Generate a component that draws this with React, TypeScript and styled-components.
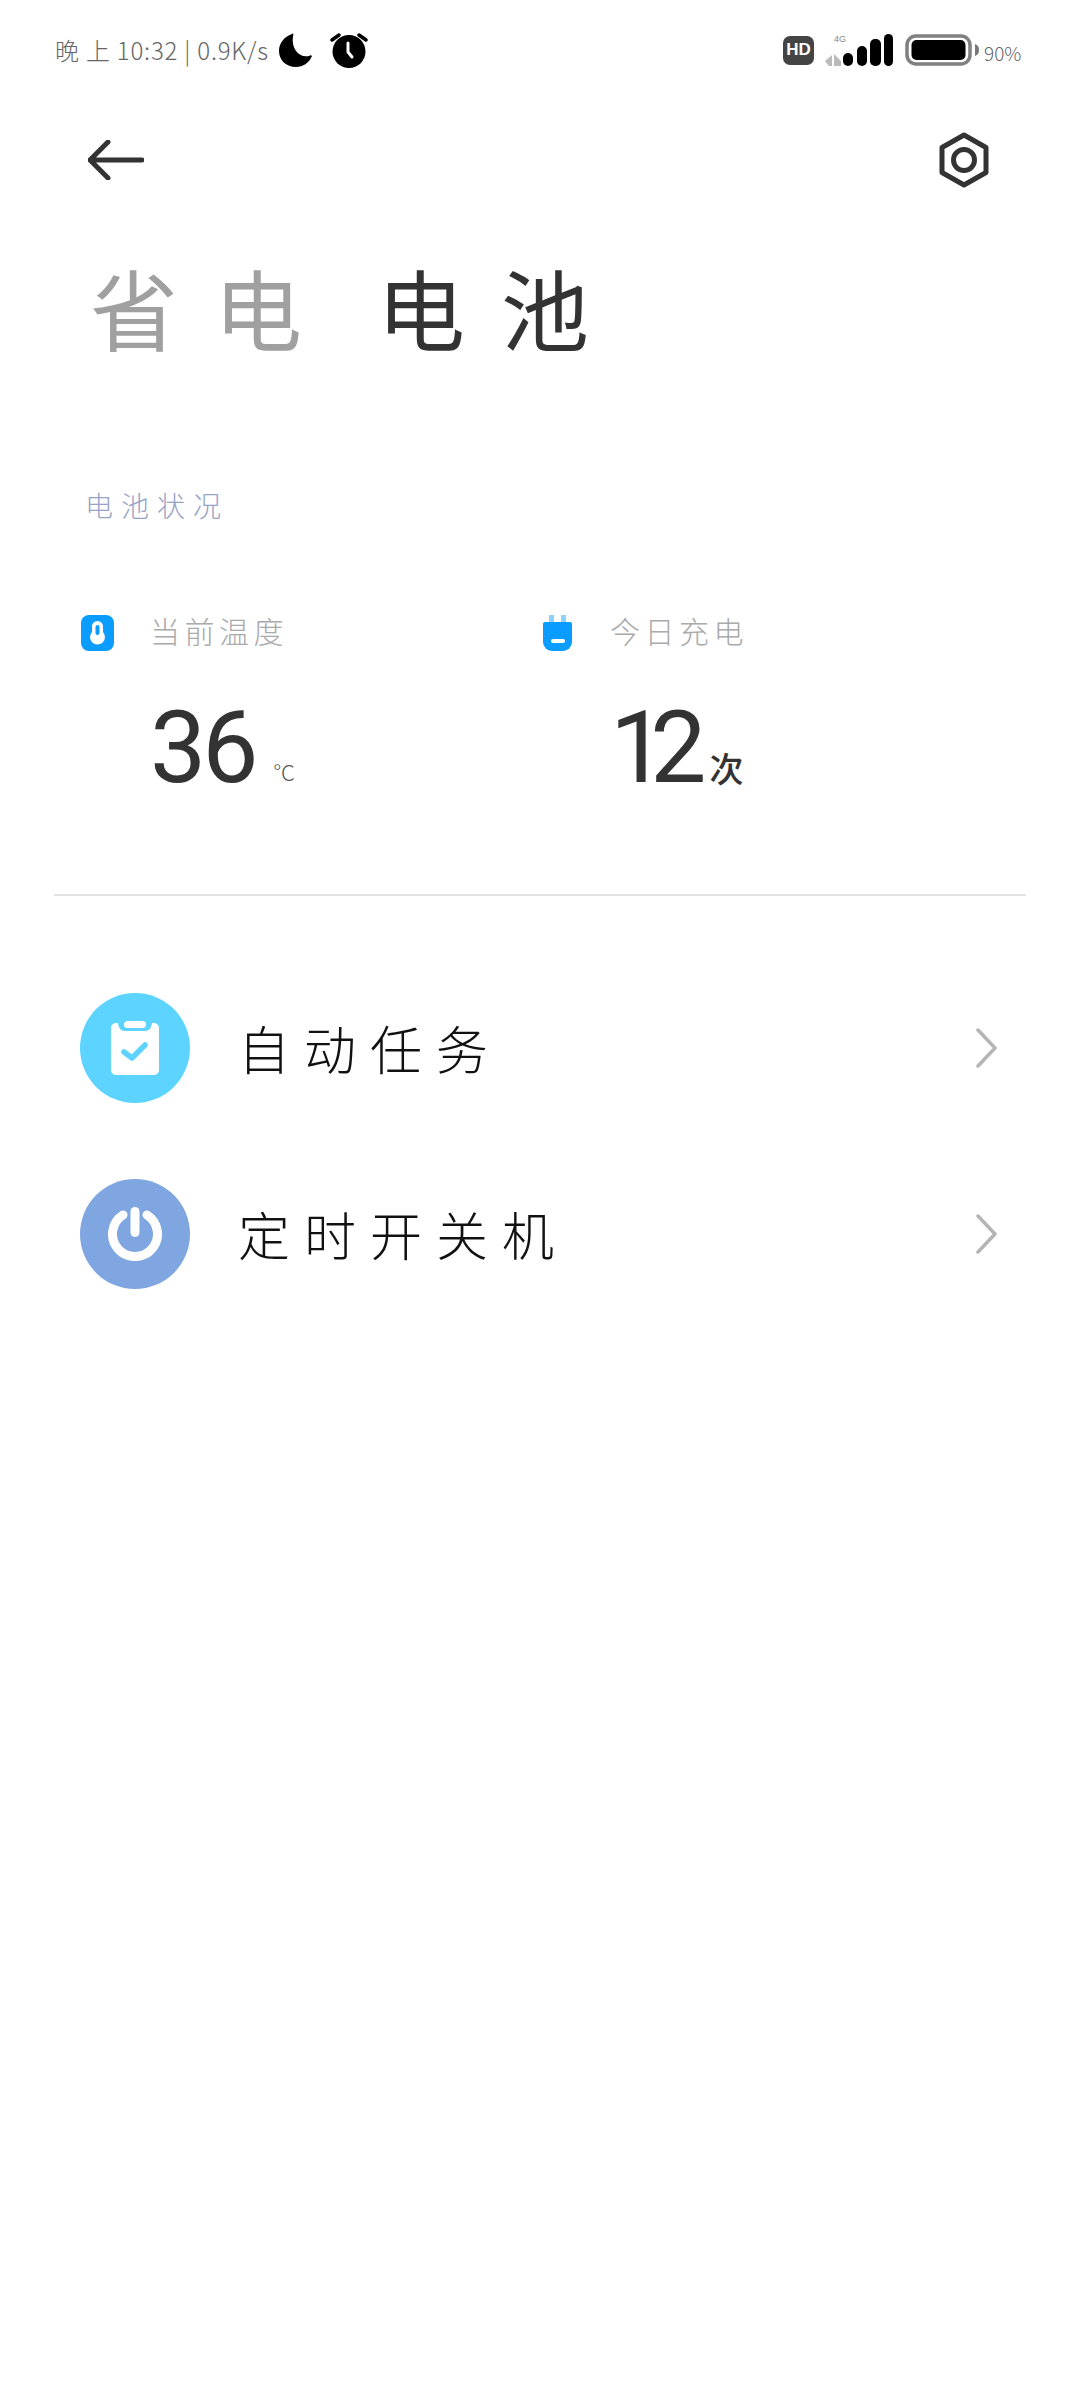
import styled, { createGlobalStyle } from "styled-components";

const GlobalStyle = createGlobalStyle`
  html, body {
    margin: 0;
    padding: 0;
    background: #fff;
  }
  * {
    box-sizing: border-box;
  }
`;

const cjk = `"Noto Sans CJK SC", "Noto Sans", sans-serif`;

const Page = styled.div`
  width: 1080px;
  height: 2400px;
  background: #fff;
  display: flex;
  flex-direction: column;
  font-family: ${cjk};
  overflow: hidden;
`;

const StatusBar = styled.div`
  height: 100px;
  padding: 0 58px 0 55px;
  display: flex;
  align-items: center;
  justify-content: space-between;
`;

const StatusGroup = styled.div`
  display: flex;
  align-items: center;
`;

const StatusText = styled.span`
  font-size: 24px;
  font-weight: 300;
  line-height: 32px;
  letter-spacing: 0.8px;
  color: #666;
  white-space: nowrap;
`;

const HdBadge = styled.span`
  width: 31px;
  height: 29px;
  border-radius: 7px;
  background: #444;
  color: #fff;
  font-family: "Liberation Sans", sans-serif;
  font-size: 17px;
  font-weight: 700;
  display: flex;
  align-items: center;
  justify-content: center;
`;

const SignalWrap = styled.div`
  position: relative;
  width: 68px;
  height: 32px;
  margin-left: 11px;
`;

const SignalType = styled.span`
  position: absolute;
  left: 9px;
  top: 0;
  font-family: "Liberation Sans", sans-serif;
  font-size: 9px;
  line-height: 10px;
  color: #888;
`;

const BatteryPercent = styled.span`
  margin-left: 4px;
  width: 38px;
  font-size: 19px;
  font-weight: 300;
  line-height: 24px;
  color: #666;
  position: relative;
  top: 3px;
`;

const NavBar = styled.div`
  height: 120px;
  padding: 0 90px 0 88px;
  display: flex;
  align-items: center;
  justify-content: space-between;
`;

const Tabs = styled.div`
  margin-top: 24px;
  height: 124px;
  padding-left: 90px;
  display: flex;
  align-items: center;
  gap: 75px;
`;

const Tab = styled.span<{ $active?: boolean }>`
  font-size: 88px;
  font-weight: 400;
  line-height: 124px;
  letter-spacing: 36px;
  margin-right: -36px;
  color: ${({ $active }) => ($active ? "#333" : "#a0a0a0")};
`;

const SectionLabel = styled.div`
  margin-top: 120px;
  padding-left: 85px;
  height: 34px;
  font-size: 28px;
  font-weight: 300;
  line-height: 34px;
  letter-spacing: 8px;
  color: #98a3c6;
`;

const Stats = styled.div`
  margin-top: 92px;
  padding-left: 81px;
  display: grid;
  grid-template-columns: 462px 1fr;
`;

const Stat = styled.div<{ $iconWidth: number }>`
  display: grid;
  grid-template-columns: ${({ $iconWidth }) => $iconWidth}px 1fr;
  grid-template-rows: 38px auto;
  align-items: center;
`;

const StatLabel = styled.span`
  padding-bottom: 6px;
  font-size: 30px;
  font-weight: 300;
  line-height: 38px;
  letter-spacing: 4.5px;
  color: #aaa;
`;

const StatValue = styled.div`
  grid-column: 2;
  margin-top: 50px;
  height: 92px;
  display: flex;
  align-items: flex-end;
`;

const StatNumber = styled.span<{ $tracking: number }>`
  font-family: Roboto, sans-serif;
  font-size: 100px;
  font-weight: 400;
  line-height: 92px;
  letter-spacing: ${({ $tracking }) => $tracking}px;
  color: #333;
`;

const UnitLight = styled.span`
  margin-left: 19px;
  margin-bottom: 10px;
  font-size: 22px;
  font-weight: 300;
  line-height: 26px;
  color: #555;
`;

const UnitBold = styled.span`
  margin-left: 19px;
  margin-bottom: 6px;
  font-size: 34px;
  font-weight: 500;
  line-height: 40px;
  color: #333;
`;

const Divider = styled.div`
  margin: 100px 54px 0;
  height: 2px;
  background: #e3e3e3;
`;

const List = styled.div`
  margin-top: 97px;
  padding: 0 83px 0 80px;
  display: flex;
  flex-direction: column;
  gap: 76px;
`;

const Row = styled.div`
  height: 110px;
  display: flex;
  align-items: center;
`;

const RowIcon = styled.div<{ $color: string }>`
  width: 110px;
  height: 110px;
  flex: none;
  border-radius: 50%;
  background: ${({ $color }) => $color};
  display: flex;
  align-items: center;
  justify-content: center;
`;

const RowTitle = styled.span`
  margin-left: 48px;
  flex: 1;
  font-size: 52px;
  font-weight: 300;
  line-height: 70px;
  letter-spacing: 14px;
  color: #111;
`;

const Chevron = () => (
  <svg width="22" height="40" viewBox="0 0 22 40" fill="none">
    <path d="M3 2L20 20L3 38" stroke="#b5b5b5" strokeWidth="3.5" strokeLinecap="round" strokeLinejoin="round" />
  </svg>
);

const App = () => (
  <Page>
    <GlobalStyle />
    <StatusBar>
      <StatusGroup>
        <StatusText>晚 上 10:32 | 0.9K/s</StatusText>
        <svg width="34" height="35" viewBox="0 0 34 35" style={{ marginLeft: 10 }}>
          <path d="M13 1C5 4 0 10 0 18C0 27 7 34 17 34C24 34 30 30 33 23C32 22 31 22 30 23C20 25 12 16 14 3C15 1 14 0 13 1Z" fill="#000" />
        </svg>
        <svg width="38" height="36" viewBox="0 0 38 36" style={{ marginLeft: 17 }}>
          <circle cx="19" cy="19.5" r="16.5" fill="#000" />
          <path d="M2 8L9 3M36 8L29 3" stroke="#000" strokeWidth="3.5" strokeLinecap="round" />
          <path d="M18 11V20L22 25" stroke="#fff" strokeWidth="3" strokeLinecap="round" strokeLinejoin="round" fill="none" />
        </svg>
      </StatusGroup>
      <StatusGroup>
        <HdBadge>HD</HdBadge>
        <SignalWrap>
          <SignalType>4G</SignalType>
          <svg width="68" height="32" viewBox="0 0 68 32">
            <path d="M0 27L7 21V32H4ZM9 20L16 27V32H9Z" fill="#bbb" />
            <rect x="18" y="19" width="10" height="13" rx="5" fill="#000" />
            <rect x="32" y="12" width="10" height="20" rx="5" fill="#000" />
            <rect x="45" y="5" width="11" height="27" rx="5" fill="#000" />
            <rect x="59" y="0" width="9" height="32" rx="4.5" fill="#000" />
          </svg>
        </SignalWrap>
        <svg width="75" height="32" viewBox="0 0 75 32" style={{ marginLeft: 12 }}>
          <rect x="2" y="2" width="63" height="28" rx="9" fill="none" stroke="#808080" strokeWidth="3.5" />
          <rect x="6.5" y="6" width="54" height="20" rx="5" fill="#000" />
          <path d="M70 10C73 11 74 13 74 16C74 19 73 21 70 22Z" fill="#777" />
        </svg>
        <BatteryPercent>90%</BatteryPercent>
      </StatusGroup>
    </StatusBar>

    <NavBar>
      <svg width="56" height="40" viewBox="0 0 56 40" fill="none">
        <path d="M20 2L2 20L20 38M2 20H54" stroke="#333" strokeWidth="5" strokeLinecap="round" strokeLinejoin="round" />
      </svg>
      <svg width="52" height="56" viewBox="0 0 52 56" fill="none">
        <path d="M26 3L48 15.5V40.5L26 53L4 40.5V15.5Z" stroke="#333" strokeWidth="5" strokeLinejoin="round" />
        <circle cx="26" cy="28" r="10.5" stroke="#333" strokeWidth="5" />
      </svg>
    </NavBar>

    <Tabs>
      <Tab>省电</Tab>
      <Tab $active>电池</Tab>
    </Tabs>

    <SectionLabel>电池状况</SectionLabel>

    <Stats>
      <Stat $iconWidth={69}>
        <svg width="33" height="36" viewBox="0 0 33 36">
          <rect width="33" height="36" rx="8" fill="#0a9dff" />
          <path d="M11 17V11.5a5.500 5.500 0 0 1 11 0V17a7.500 7.500 0 1 1-11 0Z" fill="#fff" />
          <rect x="14.5" y="10" width="4" height="10" rx="2" fill="#0a9dff" />
        </svg>
        <StatLabel>当前温度</StatLabel>
        <StatValue>
          <StatNumber $tracking={-4}>36</StatNumber>
          <UnitLight>°C</UnitLight>
        </StatValue>
      </Stat>
      <Stat $iconWidth={67}>
        <svg width="29" height="36" viewBox="0 0 29 36">
          <rect x="6" y="0" width="5" height="9" fill="#8fd0ff" />
          <rect x="18" y="0" width="5" height="9" fill="#8fd0ff" />
          <path d="M0 9C0 8 0.5 7 2 7H27C28.5 7 29 8 29 9V27a9 9 0 0 1-9 9H9a9 9 0 0 1-9-9Z" fill="#0a9dff" />
          <rect x="8" y="24" width="14" height="4" rx="2" fill="#fff" />
        </svg>
        <StatLabel>今日充电</StatLabel>
        <StatValue>
          <StatNumber $tracking={-16}>12</StatNumber>
          <UnitBold>次</UnitBold>
        </StatValue>
      </Stat>
    </Stats>

    <Divider />

    <List>
      <Row>
        <RowIcon $color="#5cd4ff">
          <svg width="48" height="54" viewBox="0 0 48 54">
            <path d="M5 2H7C7.5 7 10 10 14 10H34C38 10 40.5 7 41 2H43C45.8 2 48 4.2 48 7V49C48 51.8 45.8 54 43 54H5C2.2 54 0 51.8 0 49V7C0 4.2 2.2 2 5 2Z" fill="#fff" />
            <rect x="13" y="0" width="22" height="7" rx="3.5" fill="#fff" />
            <path d="M13 31L21 37L34 24" fill="none" stroke="#5cd4ff" strokeWidth="5.5" strokeLinecap="round" strokeLinejoin="round" />
          </svg>
        </RowIcon>
        <RowTitle>自动任务</RowTitle>
        <Chevron />
      </Row>
      <Row>
        <RowIcon $color="#7fa6e0">
          <svg width="54" height="54" viewBox="0 0 54 54" fill="none">
            <path d="M15 8A22.5 22.5 0 1 0 39 8" stroke="#fff" strokeWidth="9" strokeLinecap="round" />
            <path d="M27 4.5V25.5" stroke="#fff" strokeWidth="9" strokeLinecap="round" />
          </svg>
        </RowIcon>
        <RowTitle>定时开关机</RowTitle>
        <Chevron />
      </Row>
    </List>
  </Page>
);

export default App;
